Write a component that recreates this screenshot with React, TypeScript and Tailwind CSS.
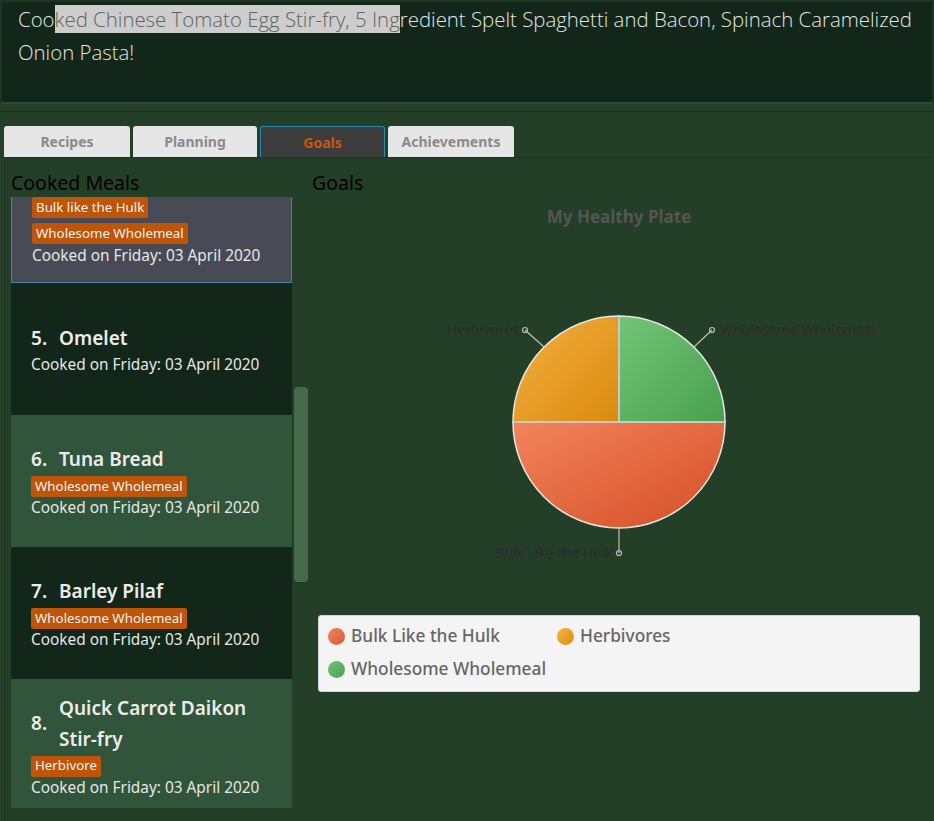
import React from 'react';

type Meal = {
  no: number;
  name: string[];
  tags: string[];
  dark: boolean;
};

const meals: Meal[] = [
  { no: 5, name: ['Omelet'], tags: [], dark: true },
  { no: 6, name: ['Tuna Bread'], tags: ['Wholesome Wholemeal'], dark: false },
  { no: 7, name: ['Barley Pilaf'], tags: ['Wholesome Wholemeal'], dark: true },
  { no: 8, name: ['Quick Carrot Daikon', 'Stir-fry'], tags: ['Herbivore'], dark: false },
];

const COOKED = 'Cooked on Friday: 03 April 2020';

const tabs = [
  { label: 'Recipes', w: 'w-[126px]' },
  { label: 'Planning', w: 'w-[124px]' },
  { label: 'Goals', w: 'w-[125px]' },
  { label: 'Achievements', w: 'w-[126px]' },
];

function Tag({ label }: { label: string }) {
  return (
    <span className="inline-flex h-[21px] items-center self-start rounded-[2px] bg-[#bf5508] px-[4px] text-[13.3px] text-[#f2f2f2]">
      {label}
    </span>
  );
}

function MealCard({ meal }: { meal: Meal }) {
  return (
    <div
      className={`flex min-h-[132px] shrink-0 flex-col justify-center px-[20px] ${
        meal.dark ? 'bg-[#13261a]' : 'bg-[#31553a]'
      }`}
    >
      <div className="flex items-center text-[19px] font-semibold leading-[31px] text-[#ececec]">
        <span className="w-[28px] shrink-0">{meal.no}.</span>
        <span>
          {meal.name.map((n) => (
            <div key={n}>{n}</div>
          ))}
        </span>
      </div>
      {meal.tags.map((t) => (
        <div key={t} className="mt-[1px] flex">
          <Tag label={t} />
        </div>
      ))}
      <div className="text-[15.4px] leading-[21px] text-[#e6e6e6]">{COOKED}</div>
    </div>
  );
}

function PieChart() {
  // pie centre in svg coords, radius
  const cx = 307;
  const cy = 225;
  const r = 106;
  const d = r * Math.SQRT1_2;
  return (
    <svg width="608" height="400" viewBox="0 0 608 400" className="block">
      <defs>
        <linearGradient id="gGreen" x1="0" y1="0" x2="1" y2="1">
          <stop offset="0" stopColor="#72c576" />
          <stop offset="1" stopColor="#48a04d" />
        </linearGradient>
        <linearGradient id="gOrange" x1="0" y1="0" x2="1" y2="1">
          <stop offset="0" stopColor="#f1b03f" />
          <stop offset="1" stopColor="#dc8a10" />
        </linearGradient>
        <linearGradient id="gRed" x1="0" y1="0" x2="1" y2="1">
          <stop offset="0" stopColor="#f3845c" />
          <stop offset="1" stopColor="#d44e25" />
        </linearGradient>
      </defs>
      <text
        x={cx}
        y={26}
        textAnchor="middle"
        fill="#555555"
        fontSize="17"
        fontWeight="700"
        fontFamily="'Noto Sans', 'Open Sans', sans-serif"
      >
        My Healthy Plate
      </text>
      <path d={`M${cx},${cy} L${cx},${cy - r} A${r},${r} 0 0 1 ${cx + r},${cy} Z`} fill="url(#gGreen)" stroke="#e6e6e6" strokeWidth="1.5" />
      <path d={`M${cx},${cy} L${cx - r},${cy} A${r},${r} 0 0 1 ${cx},${cy - r} Z`} fill="url(#gOrange)" stroke="#e6e6e6" strokeWidth="1.5" />
      <path d={`M${cx},${cy} L${cx + r},${cy} A${r},${r} 0 0 1 ${cx - r},${cy} Z`} fill="url(#gRed)" stroke="#e6e6e6" strokeWidth="1.5" />
      <line x1={cx} y1={cy - r} x2={cx} y2={cy} stroke="#c8c8c8" strokeWidth="2" />
      <line x1={cx - r} y1={cy} x2={cx + r} y2={cy} stroke="#c8c8c8" strokeWidth="2" />

      {/* label leaders */}
      <g stroke="#bdbdbd" strokeWidth="1.2" fill="none">
        <line x1={cx - d} y1={cy - d} x2={213} y2={133} />
        <circle cx={213} cy={133} r={2.5} />
        <line x1={cx + d} y1={cy - d} x2={400} y2={133} />
        <circle cx={400} cy={133} r={2.5} />
        <line x1={cx} y1={cy + r} x2={cx} y2={356} />
        <circle cx={cx} cy={356} r={2.5} />
      </g>
      <g fill="#2c2c2c" fontSize="14" fontFamily="'Noto Sans', 'Open Sans', sans-serif">
        <text x={207} y={138} textAnchor="end">Herbivores</text>
        <text x={408} y={138}>Wholesome Wholemeal</text>
        <text x={301} y={361} textAnchor="end">Bulk Like the Hulk</text>
      </g>
    </svg>
  );
}

function LegendDot({ from, to }: { from: string; to: string }) {
  return (
    <span
      className="inline-block h-[17px] w-[17px] shrink-0 rounded-full"
      style={{ background: `linear-gradient(135deg, ${from}, ${to})` }}
    />
  );
}

export default function App() {
  return (
    <div
      className="flex h-[821px] w-[934px] flex-col overflow-hidden bg-[#243f27]"
      style={{ fontFamily: "'Noto Sans', 'Open Sans', sans-serif" }}
    >
      {/* result box */}
      <div className="h-[104px] shrink-0 border-2 border-[#1d3521] border-b-[#2d4a31] bg-[#13261a] pl-[16px] pr-[10px] pt-[1px]">
        <p
          className="text-[20.4px] leading-[33px] font-light text-[#e2e6e2]"
          style={{ fontFamily: "'Open Sans', 'Noto Sans', sans-serif" }}
        >
          <span>Coo</span>
          <mark className="bg-[#cdcdcd] text-[#5e6460]">ked Chinese Tomato Egg Stir-fry, 5 Ing</mark>
          <span>redient Spelt Spaghetti and Bacon, Spinach Caramelized Onion Pasta!</span>
        </p>
      </div>

      <div className="mt-[7px] flex flex-1 flex-col border-t border-[#1c3320] px-[4px] pt-[14px]">
        {/* tabs */}
        <div className="flex h-[31px] gap-[3px]">
          {tabs.map((t) => (
            <div
              key={t.label}
              className={`flex ${t.w} items-center justify-center rounded-t-[3px] text-[14px] font-bold ${
                t.label === 'Goals'
                  ? 'border border-b-0 border-[#2a8ab0] bg-[#3c3c3c] text-[#c9560f]'
                  : 'bg-[#e6e6e6] text-[#8a8a8a]'
              }`}
            >
              {t.label}
            </div>
          ))}
        </div>

        {/* tab content */}
        <div className="flex flex-1 border-l border-t border-[#1c3320] pl-[6px]">
          {/* cooked meals */}
          <div className="flex w-[301px] shrink-0 flex-col">
            <div className="pt-[11px] text-[19.5px] leading-[28px] text-black">Cooked Meals</div>
            <div className="flex h-[611px]">
              <div className="flex w-[281px] shrink-0 flex-col overflow-hidden">
                {/* selected item, partly scrolled out of view */}
                <div className="flex h-[86px] shrink-0 flex-col border-x border-b border-[#3b8aa5] bg-[#484b55] px-[20px]">
                  <div className="flex">
                    <Tag label="Bulk like the Hulk" />
                  </div>
                  <div className="mt-[5px] flex">
                    <Tag label="Wholesome Wholemeal" />
                  </div>
                  <div className="mt-[1px] text-[15.4px] leading-[21px] text-[#e6e6e6]">{COOKED}</div>
                </div>
                {meals.map((m) => (
                  <MealCard key={m.no} meal={m} />
                ))}
              </div>
              {/* scrollbar */}
              <div className="flex w-[20px] shrink-0 justify-center pt-[190px]">
                <div className="ml-[-2px] h-[195px] w-[14px] rounded-[4px] bg-[#466b4b]" />
              </div>
            </div>
          </div>

          {/* goals */}
          <div className="flex flex-col">
            <div className="pt-[11px] text-[19.5px] leading-[28px] text-black">Goals</div>
            <PieChart />
            <div className="ml-[6px] mt-[18px] flex h-[77px] w-[602px] flex-col gap-[9px] rounded-[3px] border border-[#d6d6d6] bg-[#f4f4f4] px-[9px] pt-[8px] text-[17.3px] font-medium text-[#666666]">
              <div className="flex h-[24px] items-center">
                <div className="flex w-[229px] items-center gap-[6px]">
                  <LegendDot from="#f08560" to="#d95a30" />
                  <span>Bulk Like the Hulk</span>
                </div>
                <div className="flex items-center gap-[6px]">
                  <LegendDot from="#f3b444" to="#df8c12" />
                  <span>Herbivores</span>
                </div>
              </div>
              <div className="flex h-[24px] items-center gap-[6px]">
                <LegendDot from="#72c576" to="#48a04d" />
                <span>Wholesome Wholemeal</span>
              </div>
            </div>
          </div>
        </div>
      </div>
    </div>
  );
}
